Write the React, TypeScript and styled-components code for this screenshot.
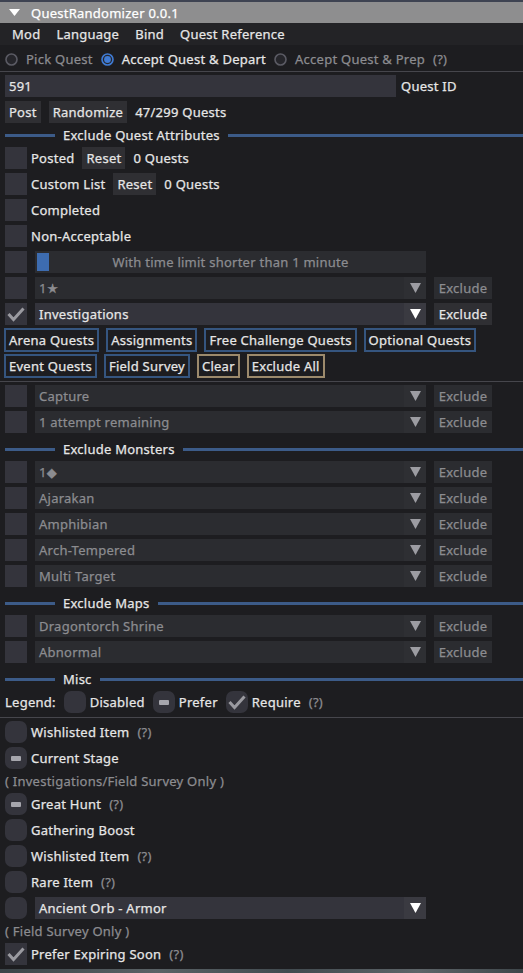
import React from 'react';
import styled, {createGlobalStyle} from 'styled-components';

const colors = {
  windowBg: '#1d1d20',
  titleBg: '#8e8e8f',
  menuBg: '#232326',
  frame: '#34343c',
  frameDim: '#2b2c30',
  arrowDim: '#2e2f33',
  arrow: '#3a3a41',
  button: '#2f2f33',
  text: '#e6e6e6',
  textDim: '#8c8c90',
  blueLine: '#3c5b88',
  blueBorder: '#35557f',
  tanBorder: '#9c8a6c',
  separator: '#46464c',
  grab: '#3d6cb0',
  radioBlue: '#3f7bd4',
};

const GlobalStyle = createGlobalStyle`
  body {
    margin: 0;
    background: ${colors.windowBg};
  }
`;

const Window = styled.div`
  width: 523px;
  height: 973px;
  overflow: hidden;
  display: flex;
  flex-direction: column;
  background: ${colors.windowBg};
  color: ${colors.text};
  font-family: 'Noto Sans', 'DejaVu Sans', sans-serif;
  font-size: 13px;
  line-height: 16px;
  letter-spacing: 0.25px;
  -webkit-text-stroke: 0.25px currentColor;
`;

const TitleBar = styled.div`
  height: 21px;
  border-top: 2px solid #3e4352;
  background: ${colors.titleBg};
  display: flex;
  align-items: center;
  gap: 11px;
  padding-left: 9px;
  color: #ffffff;
`;

const MenuBar = styled.div`
  height: 22px;
  background: ${colors.menuBg};
  display: flex;
  align-items: center;
  padding-left: 4px;
`;

const MenuItem = styled.span`
  padding: 0 8px;
`;

const Content = styled.div`
  flex: 1;
  display: flex;
  flex-direction: column;
  gap: 4px;
  padding: 6px 0 0 5px;
`;

const Row = styled.div<{$gap?: number; $tall?: boolean}>`
  display: flex;
  align-items: center;
  gap: ${p => p.$gap ?? 8}px;
  height: ${p => (p.$tall === false ? 16 : 22)}px;
  white-space: nowrap;
`;

const Separator = styled.div`
  height: 1px;
  margin: 0 0 -1px -5px;
  background: ${colors.separator};
`;

const SectionHeader = styled.div<{$spaced?: boolean}>`
  display: flex;
  align-items: center;
  gap: 8px;
  height: 16px;
  margin-top: ${p => (p.$spaced ? 4 : 0)}px;
`;

const HeaderLine = styled.span<{$fill?: boolean}>`
  height: 3px;
  background: ${colors.blueLine};
  width: ${p => (p.$fill ? 'auto' : '50px')};
  flex: ${p => (p.$fill ? 1 : 'none')};
`;

const Label = styled.span<{$dim?: boolean}>`
  color: ${p => (p.$dim ? colors.textDim : colors.text)};
`;

const Hint = styled.span`
  color: ${colors.textDim};
`;

const CheckLabel = styled.label`
  display: flex;
  align-items: center;
  gap: 4px;
`;

const RadioLabel = styled.label<{$dim?: boolean}>`
  display: flex;
  align-items: center;
  gap: 8px;
  color: ${p => (p.$dim ? colors.textDim : colors.text)};
`;

const Box = styled.span<{$round?: boolean}>`
  width: 22px;
  height: 22px;
  flex: none;
  display: flex;
  align-items: center;
  justify-content: center;
  background: ${colors.frame};
  border-radius: ${p => (p.$round ? 7 : 0)}px;
`;

const Dash = styled.span`
  width: 10px;
  height: 5px;
  border-radius: 1px;
  background: #a6a6ad;
`;

const TextInput = styled.div`
  width: 391px;
  height: 22px;
  display: flex;
  align-items: center;
  padding-left: 4px;
  box-sizing: border-box;
  background: ${colors.frame};
`;

const Button = styled.span<{$dim?: boolean}>`
  height: 22px;
  display: flex;
  align-items: center;
  padding: 0 4px;
  background: ${p => (p.$dim ? colors.frameDim : colors.button)};
  color: ${p => (p.$dim ? colors.textDim : colors.text)};
`;

const ExcludeButton = styled(Button)`
  width: 58px;
  box-sizing: border-box;
  justify-content: center;
`;

const TagButton = styled.span<{$tone: 'blue' | 'tan'}>`
  height: 22px;
  box-sizing: border-box;
  display: flex;
  align-items: center;
  padding: 0 3px;
  border: 1px solid ${p => (p.$tone === 'blue' ? colors.blueBorder : colors.tanBorder)};
  outline: 1px solid ${p => (p.$tone === 'blue' ? colors.blueBorder : colors.tanBorder)};
`;

const ComboFrame = styled.div<{$dim?: boolean}>`
  width: 391px;
  height: 22px;
  display: flex;
  background: ${p => (p.$dim ? colors.frameDim : colors.frame)};
  color: ${p => (p.$dim ? colors.textDim : colors.text)};
`;

const ComboText = styled.span`
  flex: 1;
  display: flex;
  align-items: center;
  padding-left: 4px;
`;

const ComboArrow = styled.span<{$dim?: boolean}>`
  width: 22px;
  display: flex;
  align-items: center;
  justify-content: center;
  background: ${p => (p.$dim ? colors.arrowDim : colors.arrow)};
`;

const SliderFrame = styled.div`
  position: relative;
  width: 391px;
  height: 22px;
  display: flex;
  align-items: center;
  justify-content: center;
  background: ${colors.frameDim};
  color: ${colors.textDim};
`;

const SliderGrab = styled.span`
  position: absolute;
  left: 2px;
  top: 2px;
  width: 12px;
  height: 18px;
  background: ${colors.grab};
`;

const Footer = styled.div`
  height: 4px;
  background: linear-gradient(90deg, #3b4448, #5a6266 30%, #414a4f 55%, #5d6468 80%, #3e464a);
`;

const Triangle = ({color, w = 11, h = 7}: {color: string; w?: number; h?: number}) => (
  <svg width={w} height={h} viewBox={`0 0 ${w} ${h}`}>
    <polygon points={`0,0 ${w},0 ${w / 2},${h}`} fill={color} />
  </svg>
);

const CheckMark = ({color = '#9a9aa0'}: {color?: string}) => (
  <svg width="22" height="22" viewBox="0 0 22 22">
    <polyline points="3.5,11 8.5,16.5 18.5,5.5" fill="none" stroke={color} strokeWidth="3" />
  </svg>
);

const Radio = ({on}: {on?: boolean}) => (
  <svg width="13" height="13" viewBox="0 0 13 13">
    <circle cx="6.5" cy="6.5" r="5.5" fill="#26262b" stroke={on ? colors.radioBlue : '#5b5b64'} strokeWidth="1.6" />
    {on && <circle cx="6.5" cy="6.5" r="3.4" fill={colors.radioBlue} />}
  </svg>
);

type Mark = 'none' | 'check' | 'dash';

const CheckBox = ({mark = 'none', round}: {mark?: Mark; round?: boolean}) => (
  <Box $round={round}>
    {mark === 'check' && <CheckMark />}
    {mark === 'dash' && <Dash />}
  </Box>
);

const Combo = ({value, dim}: {value: string; dim?: boolean}) => (
  <ComboFrame $dim={dim}>
    <ComboText>{value}</ComboText>
    <ComboArrow $dim={dim}>
      <Triangle color={dim ? '#9c9ca2' : '#ffffff'} w={11} h={10} />
    </ComboArrow>
  </ComboFrame>
);

const FilterRow = ({value, dim = true, mark}: {value: string; dim?: boolean; mark?: Mark}) => (
  <Row>
    <CheckBox mark={mark} />
    <Combo value={value} dim={dim} />
    <ExcludeButton $dim={dim}>Exclude</ExcludeButton>
  </Row>
);

const Header = ({title, spaced}: {title: string; spaced?: boolean}) => (
  <SectionHeader $spaced={spaced}>
    <HeaderLine />
    <span>{title}</span>
    <HeaderLine $fill />
  </SectionHeader>
);

const MiscOption = ({label, mark, hint}: {label: string; mark?: Mark; hint?: boolean}) => (
  <Row>
    <CheckLabel>
      <CheckBox mark={mark} round />
      <span>{label}</span>
    </CheckLabel>
    {hint && <Hint>(?)</Hint>}
  </Row>
);

const monsterFilters = ['1◆', 'Ajarakan', 'Amphibian', 'Arch-Tempered', 'Multi Target'];
const mapFilters = ['Dragontorch Shrine', 'Abnormal'];

const App = () => (
  <Window>
    <GlobalStyle />
    <TitleBar>
      <Triangle color="#ffffff" />
      <span>QuestRandomizer 0.0.1</span>
    </TitleBar>
    <MenuBar>
      <MenuItem>Mod</MenuItem>
      <MenuItem>Language</MenuItem>
      <MenuItem>Bind</MenuItem>
      <MenuItem>Quest Reference</MenuItem>
    </MenuBar>
    <Content>
      <Row $tall={false}>
        <RadioLabel $dim>
          <Radio />
          Pick Quest
        </RadioLabel>
        <RadioLabel>
          <Radio on />
          Accept Quest &amp; Depart
        </RadioLabel>
        <RadioLabel $dim>
          <Radio />
          Accept Quest &amp; Prep
        </RadioLabel>
        <Hint>(?)</Hint>
      </Row>
      <Separator />
      <Row $gap={5}>
        <TextInput>591</TextInput>
        <Label>Quest ID</Label>
      </Row>
      <Row>
        <Button>Post</Button>
        <Button>Randomize</Button>
        <Label>47/299 Quests</Label>
      </Row>

      <Header title="Exclude Quest Attributes" />
      <Row>
        <CheckLabel>
          <CheckBox />
          <span>Posted</span>
        </CheckLabel>
        <Button>Reset</Button>
        <Label>0 Quests</Label>
      </Row>
      <Row>
        <CheckLabel>
          <CheckBox />
          <span>Custom List</span>
        </CheckLabel>
        <Button>Reset</Button>
        <Label>0 Quests</Label>
      </Row>
      <Row>
        <CheckLabel>
          <CheckBox />
          <span>Completed</span>
        </CheckLabel>
      </Row>
      <Row>
        <CheckLabel>
          <CheckBox />
          <span>Non-Acceptable</span>
        </CheckLabel>
      </Row>
      <Row>
        <CheckBox />
        <SliderFrame>
          <SliderGrab />
          With time limit shorter than 1 minute
        </SliderFrame>
      </Row>
      <FilterRow value="1★" />
      <FilterRow value="Investigations" dim={false} mark="check" />
      <Row $gap={9}>
        <TagButton $tone="blue">Arena Quests</TagButton>
        <TagButton $tone="blue">Assignments</TagButton>
        <TagButton $tone="blue">Free Challenge Quests</TagButton>
        <TagButton $tone="blue">Optional Quests</TagButton>
      </Row>
      <Row $gap={9}>
        <TagButton $tone="blue">Event Quests</TagButton>
        <TagButton $tone="blue">Field Survey</TagButton>
        <TagButton $tone="tan">Clear</TagButton>
        <TagButton $tone="tan">Exclude All</TagButton>
      </Row>
      <Separator />
      <FilterRow value="Capture" />
      <FilterRow value="1 attempt remaining" />

      <Header title="Exclude Monsters" spaced />
      {monsterFilters.map(name => (
        <FilterRow key={name} value={name} />
      ))}

      <Header title="Exclude Maps" spaced />
      {mapFilters.map(name => (
        <FilterRow key={name} value={name} />
      ))}

      <Header title="Misc" spaced />
      <Row>
        <Label>Legend:</Label>
        <CheckLabel>
          <CheckBox round />
          <span>Disabled</span>
        </CheckLabel>
        <CheckLabel>
          <CheckBox round mark="dash" />
          <span>Prefer</span>
        </CheckLabel>
        <CheckLabel>
          <CheckBox round mark="check" />
          <span>Require</span>
        </CheckLabel>
        <Hint>(?)</Hint>
      </Row>
      <Separator />
      <MiscOption label="Wishlisted Item" hint />
      <MiscOption label="Current Stage" mark="dash" />
      <Row $tall={false}>
        <Hint>( Investigations/Field Survey Only )</Hint>
      </Row>
      <MiscOption label="Great Hunt" mark="dash" hint />
      <MiscOption label="Gathering Boost" />
      <MiscOption label="Wishlisted Item" hint />
      <MiscOption label="Rare Item" hint />
      <Row>
        <CheckBox round />
        <Combo value="Ancient Orb - Armor" />
      </Row>
      <Row $tall={false}>
        <Hint>( Field Survey Only )</Hint>
      </Row>
      <Row>
        <CheckLabel>
          <CheckBox mark="check" />
          <span>Prefer Expiring Soon</span>
        </CheckLabel>
        <Hint>(?)</Hint>
      </Row>
    </Content>
    <Footer />
  </Window>
);

export default App;
